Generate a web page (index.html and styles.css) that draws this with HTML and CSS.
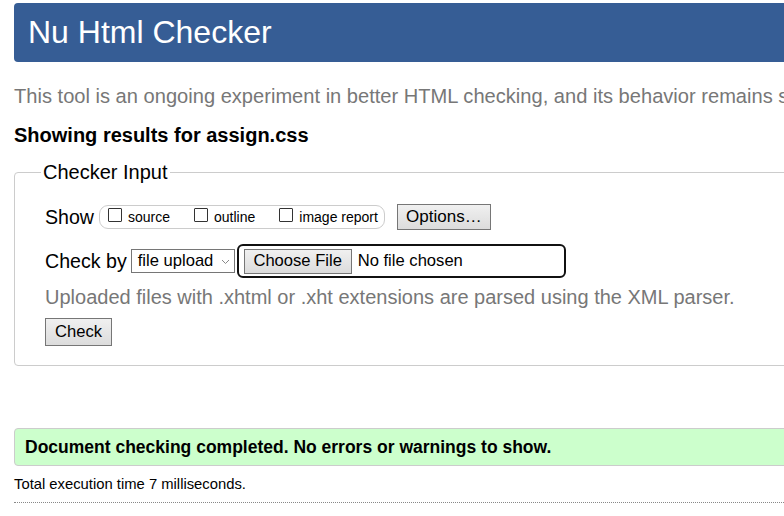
FILE: index.html
```html
<!DOCTYPE html>
<html>
<head>
<meta charset="utf-8">
<link rel="stylesheet" href="styles.css">
</head>
<body>
<div class="page">
  <h1 class="title">Nu Html Checker</h1>
  <p class="intro">This tool is an ongoing experiment in better HTML checking, and its behavior remains subject to change</p>
  <p class="showing">Showing results for assign.css</p>
  <fieldset class="input-box">
    <legend class="legend">Checker Input</legend>
    <div class="row show-row">
      <span class="row-label">Show</span>
      <span class="pill">
        <label class="opt"><span class="cb"></span>source</label>
        <label class="opt"><span class="cb"></span>outline</label>
        <label class="opt"><span class="cb"></span>image report</label>
      </span>
      <span class="btn options-btn">Options…</span>
    </div>
    <div class="row check-row">
      <span class="row-label">Check by</span>
      <span class="select">file upload<svg class="chev" width="9" height="6" viewBox="0 0 9 6"><path d="M1 1 L4.5 4.5 L8 1" fill="none" stroke="#888" stroke-width="1"/></svg></span>
      <span class="file-wrap">
        <span class="btn file-btn">Choose File</span>
        <span class="nofile">No file chosen</span>
      </span>
    </div>
    <p class="hint">Uploaded files with .xhtml or .xht extensions are parsed using the XML parser.</p>
    <span class="btn check-btn">Check</span>
  </fieldset>
  <div class="success">Document checking completed. No errors or warnings to show.</div>
  <p class="total">Total execution time 7 milliseconds.</p>
  <hr class="dots">
</div>
</body>
</html>
```
FILE: styles.css
```css
html, body {
  margin: 0;
  padding: 0;
  overflow: hidden;
  background: #fff;
}
body {
  font-family: "Liberation Sans", Arial, sans-serif;
  color: #000;
}
.page {
  width: 1000px;
  padding: 3px 0 0 14px;
}
.title {
  margin: 0;
  height: 59px;
  box-sizing: border-box;
  background: #365d95;
  color: #fff;
  border-radius: 4px;
  font-weight: normal;
  font-size: 32px;
  line-height: 59px;
  padding-left: 14px;
}
.intro {
  margin: 23px 0 0 0;
  font-size: 20.1px;
  line-height: 22px;
  color: #777;
  white-space: nowrap;
}
.showing {
  margin: 17px 0 0 0;
  font-size: 20px;
  line-height: 22px;
  font-weight: bold;
}
.input-box {
  margin: 15px 0 0 0;
  border: 1px solid #ccc;
  border-radius: 4px;
  padding: 21px 0 19px 30px;
  min-width: 0;
}
.legend {
  font-size: 20px;
  line-height: 22px;
  padding: 0 2px;
  margin-left: -4px;
}
.row {
  display: flex;
  align-items: center;
}
.row-label {
  font-size: 19.6px;
}
.show-row {
  height: 26px;
}
.pill {
  display: flex;
  align-items: center;
  margin-left: 5px;
  height: 24px;
  box-sizing: border-box;
  border: 1px solid #ccc;
  border-radius: 9px;
  padding: 0 6px 0 8px;
  font-size: 14px;
  gap: 24px;
}
.opt {
  display: flex;
  align-items: center;
}
.cb {
  width: 12px;
  height: 12px;
  border: 1px solid #333;
  border-radius: 1px;
  margin: -4px 6px 0 0;
  background: #fff;
}
.btn {
  display: inline-flex;
  align-items: center;
  justify-content: center;
  box-sizing: border-box;
  border: 1px solid #767676;
  background: linear-gradient(#f0f0f0, #dcdcdc);
  font-size: 16.6px;
  color: #000;
}
.options-btn {
  margin-left: 12px;
  width: 94px;
  height: 26px;
  font-size: 17px;
}
.check-row {
  margin-top: 14px;
  height: 34px;
}
.select {
  display: inline-flex;
  align-items: center;
  margin-left: 4px;
  width: 104px;
  height: 24px;
  box-sizing: border-box;
  border: 1px solid #767676;
  font-size: 16.6px;
  padding-left: 6px;
  background: #fff;
}
.chev {
  margin-left: 8px;
  margin-top: 2px;
}
.file-wrap {
  display: inline-flex;
  align-items: center;
  margin-left: 2px;
  width: 329px;
  height: 34px;
  box-sizing: border-box;
  border: 2px solid #111;
  border-radius: 6px;
  padding-left: 5px;
}
.file-btn {
  width: 108px;
  height: 25px;
}
.nofile {
  font-size: 16.6px;
  margin-left: 6px;
}
.hint {
  margin: 8px 0 0 0;
  font-size: 20px;
  line-height: 22px;
  color: #777;
}
.check-btn {
  margin-top: 10px;
  width: 67px;
  height: 28px;
}
.success {
  margin-top: 62px;
  height: 38px;
  box-sizing: border-box;
  background: #ccffcc;
  border: 1px solid #ccc;
  border-radius: 4px;
  padding-left: 10px;
  font-size: 17.5px;
  font-weight: bold;
  line-height: 36px;
}
.total {
  margin: 10px 0 0 0;
  font-size: 14.8px;
  line-height: 16px;
}
.dots {
  margin: 10px 0 0 0;
  border: 0;
  border-top: 1px dotted #888;
  height: 0;
}
```
